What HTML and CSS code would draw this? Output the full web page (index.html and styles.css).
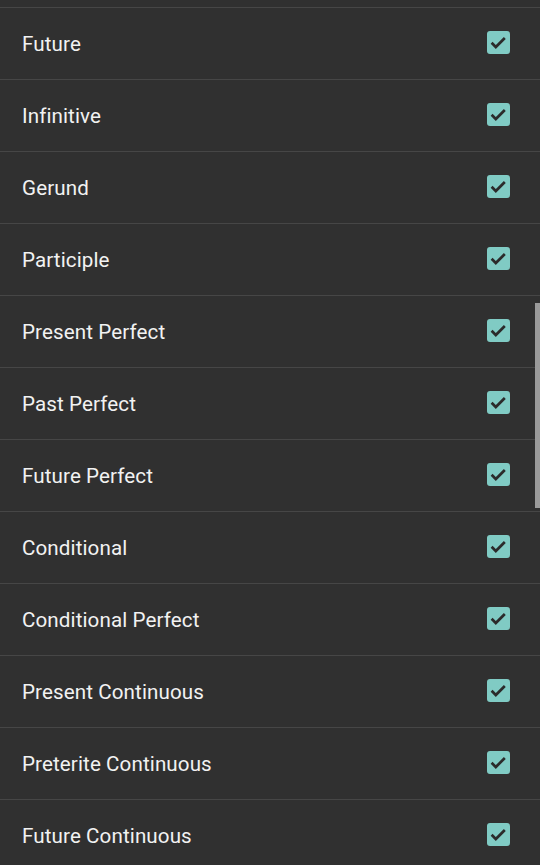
FILE: index.html
```html
<!DOCTYPE html>
<html>
<head>
<meta charset="utf-8">
<link rel="stylesheet" href="styles.css">
</head>
<body>
<div class="list">
  <div class="spacer"></div>
  <div class="row"><span class="label">Future</span><span class="cb"><svg viewBox="0 0 24 24"><path d="M4.8 12.3l4.4 4.4 9.4-9.4"/></svg></span></div>
  <div class="row"><span class="label">Infinitive</span><span class="cb"><svg viewBox="0 0 24 24"><path d="M4.8 12.3l4.4 4.4 9.4-9.4"/></svg></span></div>
  <div class="row"><span class="label">Gerund</span><span class="cb"><svg viewBox="0 0 24 24"><path d="M4.8 12.3l4.4 4.4 9.4-9.4"/></svg></span></div>
  <div class="row"><span class="label">Participle</span><span class="cb"><svg viewBox="0 0 24 24"><path d="M4.8 12.3l4.4 4.4 9.4-9.4"/></svg></span></div>
  <div class="row"><span class="label">Present Perfect</span><span class="cb"><svg viewBox="0 0 24 24"><path d="M4.8 12.3l4.4 4.4 9.4-9.4"/></svg></span></div>
  <div class="row"><span class="label">Past Perfect</span><span class="cb"><svg viewBox="0 0 24 24"><path d="M4.8 12.3l4.4 4.4 9.4-9.4"/></svg></span></div>
  <div class="row"><span class="label">Future Perfect</span><span class="cb"><svg viewBox="0 0 24 24"><path d="M4.8 12.3l4.4 4.4 9.4-9.4"/></svg></span></div>
  <div class="row"><span class="label">Conditional</span><span class="cb"><svg viewBox="0 0 24 24"><path d="M4.8 12.3l4.4 4.4 9.4-9.4"/></svg></span></div>
  <div class="row"><span class="label">Conditional Perfect</span><span class="cb"><svg viewBox="0 0 24 24"><path d="M4.8 12.3l4.4 4.4 9.4-9.4"/></svg></span></div>
  <div class="row"><span class="label">Present Continuous</span><span class="cb"><svg viewBox="0 0 24 24"><path d="M4.8 12.3l4.4 4.4 9.4-9.4"/></svg></span></div>
  <div class="row"><span class="label">Preterite Continuous</span><span class="cb"><svg viewBox="0 0 24 24"><path d="M4.8 12.3l4.4 4.4 9.4-9.4"/></svg></span></div>
  <div class="row"><span class="label">Future Continuous</span><span class="cb"><svg viewBox="0 0 24 24"><path d="M4.8 12.3l4.4 4.4 9.4-9.4"/></svg></span></div>
</div>
<div class="scrollbar"></div>
</body>
</html>
```
FILE: styles.css
```css
html, body {
  margin: 0;
  padding: 0;
  background: #303030;
  height: 865px;
  overflow: hidden;
}
body {
  font-family: Roboto, "Noto Sans", sans-serif;
  position: relative;
}
.spacer {
  height: 7px;
  border-bottom: 1px solid #464646;
}
.row {
  height: 71px;
  border-bottom: 1px solid #464646;
  display: flex;
  align-items: center;
  justify-content: space-between;
  padding: 0 30px 0 22px;
}
.label {
  color: #f2f2f2;
  font-size: 20.6px;
  letter-spacing: 0.1px;
}
.cb {
  width: 23px;
  height: 23px;
  margin-top: -2px;
  border-radius: 3px;
  background: #80cbc4;
  display: flex;
}
.cb svg {
  width: 23px;
  height: 23px;
  fill: none;
  stroke: #2b2b2b;
  stroke-width: 2.8;
}
.scrollbar {
  position: absolute;
  right: 0;
  top: 303px;
  width: 5px;
  height: 205px;
  background: #9a9a9a;
}
```
